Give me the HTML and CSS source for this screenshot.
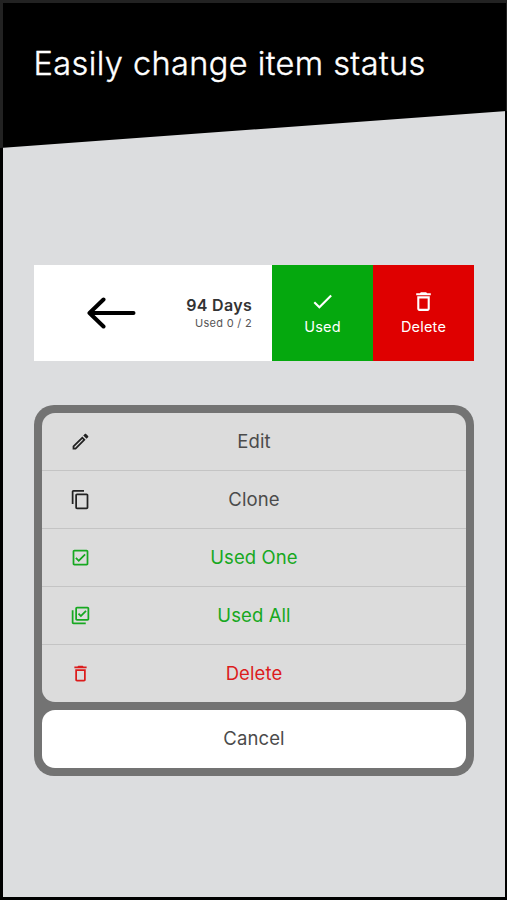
FILE: index.html
```html
<!DOCTYPE html>
<html lang="en">
<head>
<meta charset="utf-8">
<title>Item status</title>
<link rel="stylesheet" href="styles.css">
</head>
<body>
<svg class="defs" width="0" height="0" aria-hidden="true">
  <symbol id="trash" viewBox="0 0 24 24"><path d="M6 19c0 1.100.9 2 2 2h8c1.100 0 2-.9 2-2V7H6v12zM8 9h8v10H8V9zm7.500-5l-1-1h-5l-1 1H5v2h14V4z"/></symbol>
</svg>
<div class="screen">
  <header class="header"><h1 class="title"><span>Easily change item status</span></h1></header>
  <main class="content">
    <section class="swipe">
      <div class="item">
        <svg class="arrow" viewBox="0 0 48 32"><path d="M46 16H2M16 2.500L2 16l14 13.500"/></svg>
        <div class="info"><strong class="days">94 Days</strong><span class="usage">Used 0 / 2</span></div>
      </div>
      <button class="action used">
        <svg class="icon" viewBox="0 0 24 24"><path d="M9 16.170L4.830 12l-1.420 1.410L9 19 21 7l-1.410-1.410z"/></svg>
        <span>Used</span>
      </button>
      <button class="action delete"><svg class="icon"><use href="#trash"/></svg><span>Delete</span></button>
    </section>
    <section class="sheet">
      <ul class="menu">
        <li class="row"><svg class="icon" viewBox="0 0 24 24"><path d="M14.060 9.020l.92.92L5.920 19H5v-.92l9.060-9.060M17.660 3c-.25 0-.51.1-.7.290l-1.830 1.830 3.750 3.750 1.830-1.830c.39-.39.39-1.020 0-1.410l-2.340-2.340c-.2-.2-.45-.29-.71-.29zm-3.600 3.190L3 17.250V21h3.750L17.810 9.940l-3.750-3.750z"/></svg><span>Edit</span></li>
        <li class="row"><svg class="icon" viewBox="0 0 24 24"><path d="M16 1H4c-1.100 0-2 .9-2 2v14h2V3h12V1zm3 4H8c-1.100 0-2 .9-2 2v14c0 1.100.9 2 2 2h11c1.100 0 2-.9 2-2V7c0-1.100-.9-2-2-2zm0 16H8V7h11v14z"/></svg><span>Clone</span></li>
        <li class="row positive"><svg class="icon" viewBox="0 0 24 24"><path d="M19 3H5c-1.100 0-2 .9-2 2v14c0 1.100.9 2 2 2h14c1.100 0 2-.9 2-2V5c0-1.100-.9-2-2-2zm0 16H5V5h14v14zM17.990 9l-1.410-1.420-6.590 6.590-2.580-2.570-1.420 1.410 4 3.990z"/></svg><span>Used One</span></li>
        <li class="row positive"><svg class="icon" viewBox="0 0 24 24"><path d="M20 2H8c-1.100 0-2 .9-2 2v12c0 1.100.9 2 2 2h12c1.100 0 2-.9 2-2V4c0-1.100-.9-2-2-2zm0 14H8V4h12v12zm-7.530-2L9 10.500l1.400-1.410 2.070 2.080L17.600 6 19 7.410 12.470 14zM4 20h14v2H4c-1.100 0-2-.9-2-2V6h2v14z"/></svg><span>Used All</span></li>
        <li class="row negative"><svg class="icon"><use href="#trash"/></svg><span>Delete</span></li>
      </ul>
      <button class="cancel">Cancel</button>
    </section>
  </main>
</div>
</body>
</html>
```
FILE: styles.css
```css
* { box-sizing: border-box; }
body {
  margin: 0;
  background: #000;
  font-family: Inter, "Liberation Sans", sans-serif;
}
.defs { display: none; }
.screen {
  height: 900px;
  border: solid #000;
  border-width: 0 2px 3px 3px;
  background: #dcdddf;
}
.header {
  height: 148px;
  margin: 0 -2px 0 -3px;
  padding: 44px 0 0 34px;
  border: solid #222;
  border-width: 3px 1px 0 3px;
  background: #000;
  clip-path: polygon(0 0, 100% 0, 100% 111px, 0 148px);
}
.title {
  margin: 0 0 0 -3.500px;
  color: #fff;
  font-size: 32.500px;
  font-weight: 300;
  line-height: 34px;
  letter-spacing: 0.420px;
  white-space: nowrap;
  -webkit-text-stroke: 0.400px #fff;
}
.content { padding: 117px 31px 0; }
.swipe {
  display: grid;
  grid-template-columns: 238px 101px 101px;
  width: 440px;
  height: 95.500px;
}
.item {
  display: flex;
  align-items: center;
  justify-content: space-between;
  padding: 0 20px 0 53px;
  background: #fff;
}
.arrow {
  width: 49px;
  height: 32px;
  fill: none;
  stroke: #000;
  stroke-width: 4;
  stroke-linecap: round;
  stroke-linejoin: round;
}
.info {
  display: flex;
  flex-direction: column;
  align-items: flex-end;
  padding-top: 1px;
}
.days {
  color: #333;
  font-size: 16px;
  font-weight: 600;
  line-height: 20px;
  letter-spacing: 0.3px;
}
.usage {
  color: #555;
  font-size: 11px;
  line-height: 17px;
  letter-spacing: 0.3px;
}
button {
  margin: 0;
  padding: 0;
  border: 0;
  font: inherit;
}
.icon { fill: currentColor; }
.action {
  display: flex;
  flex-direction: column;
  align-items: center;
  padding-top: 24px;
  color: #fff;
  font-size: 14.500px;
  line-height: 18px;
  letter-spacing: 0.2px;
}
.action .icon {
  width: 25px;
  height: 25px;
  margin-bottom: 4px;
}
.used { background: #05a80e; }
.delete { background: #df0000; }
.sheet {
  width: 440px;
  margin-top: 44.500px;
  padding: 8px;
  border-radius: 20px;
  background: #737373;
}
.menu {
  margin: 0 0 8px;
  padding: 0;
  list-style: none;
  overflow: hidden;
  border-radius: 13px;
  background: #dcdcdc;
}
.row {
  display: grid;
  grid-template-columns: 76px 1fr 76px;
  align-items: center;
  height: 58px;
  padding-bottom: 2px;
  border-bottom: 1px solid #c4c4c4;
  color: #4b4b4b;
  font-size: 18.500px;
  letter-spacing: 0.1px;
  text-align: center;
}
.row:last-child {
  height: 57px;
  border-bottom: 0;
}
.row .icon {
  width: 21px;
  height: 21px;
  margin: 2px 0 0 28px;
  color: #222;
}
.row.positive, .row.positive .icon { color: #17a821; }
.row.negative, .row.negative .icon { color: #dc1c1c; }
.cancel {
  display: block;
  width: 100%;
  height: 58px;
  padding-bottom: 2px;
  border-radius: 13px;
  background: #fff;
  color: #4b4b4b;
  font-size: 18.500px;
  letter-spacing: 0.1px;
}
```
